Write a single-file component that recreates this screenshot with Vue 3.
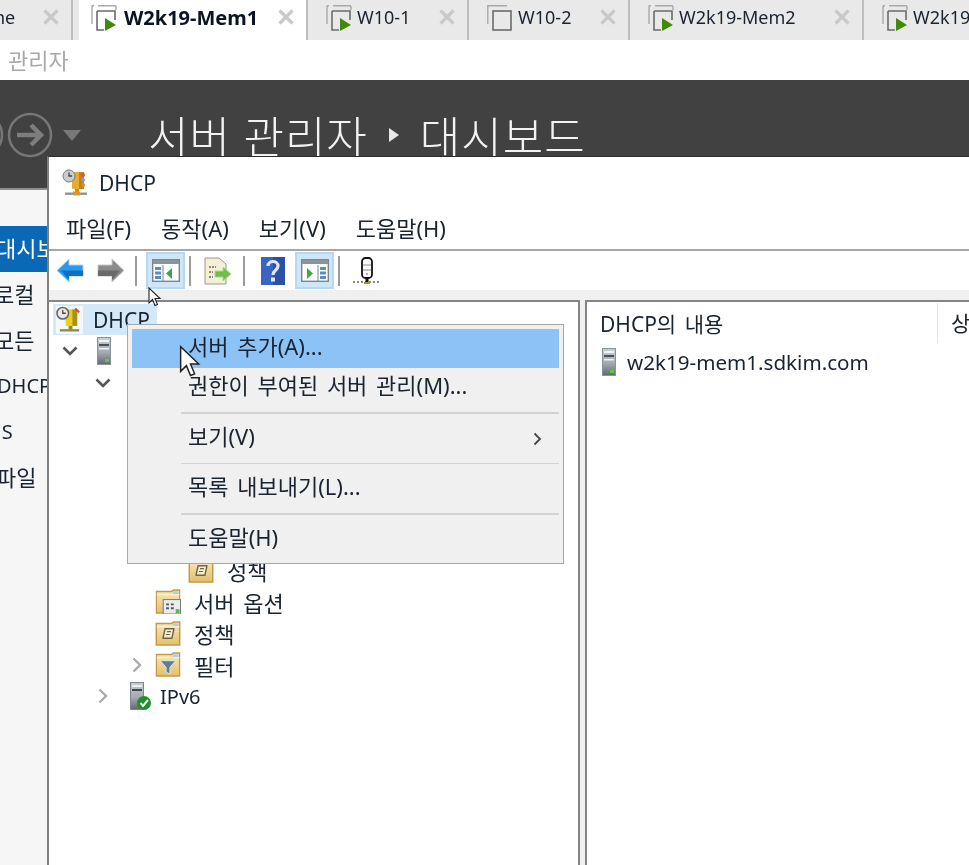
<script setup>
const tabs = [
  { label: 'ne', width: 71, first: true },
  { label: 'W2k19-Mem1', width: 227, icon: 'play', active: true },
  { label: 'W10-1', width: 153, icon: 'play' },
  { label: 'W10-2', width: 153, icon: 'plain' },
  { label: 'W2k19-Mem2', width: 226, icon: 'play' },
  { label: 'W2k19', width: 120, icon: 'play', last: true }
]
const sideItems = [
  { label: '대시보드', shift: -4, active: true },
  { label: '로컬 서버', shift: -6 },
  { label: '모든 서버', shift: -6 },
  { label: 'DHCP', shift: -3, latin: true },
  { label: 'DNS', shift: -28, latin: true },
  { label: '파일 및 저장소 서비스', shift: -4 }
]
const menus = ['파일(F)', '동작(A)', '보기(V)', '도움말(H)']
</script>

<template>
  <div class="screen">
    <svg class="defs" width="0" height="0">
      <defs>
        <linearGradient id="srv" x1="0" y1="0" x2="0" y2="1">
          <stop offset="0" stop-color="#c8ced2" /><stop offset=".55" stop-color="#a3abb0" /><stop offset="1" stop-color="#5f696f" />
        </linearGradient>
        <linearGradient id="fold" x1="0" y1="0" x2="0" y2="1">
          <stop offset="0" stop-color="#f8e9bb" /><stop offset="1" stop-color="#e3bf6c" />
        </linearGradient>
        <symbol id="server" viewBox="0 0 14 28">
          <rect x=".5" y=".5" width="13" height="27" fill="url(#srv)" stroke="#8a9398" />
          <rect x="2" y="3" width="10" height="2" fill="#f1f3f4" />
          <rect x="2" y="7" width="10" height="2" fill="#4a5257" />
          <rect x="2" y="11" width="10" height="1.5" fill="#eef1f2" />
          <rect x="8" y="22" width="4" height="3" fill="#63c63a" />
        </symbol>
        <symbol id="folder" viewBox="0 0 26 26">
          <path d="M.8 6V2.5h16l2 -1.5h6.4v24H.8z" fill="url(#fold)" stroke="#c29a45" stroke-width="1.5" />
          <path d="M1 6h24" stroke="#fff6d8" />
          <path d="M18 2.3h6v3h-6z" fill="#a9d2e6" />
        </symbol>
        <symbol id="scroll" viewBox="0 0 26 26">
          <path d="M10 8H19V9L17 18H8V17z" fill="#f7eccb" stroke="#6f6446" stroke-width="1.5" />
          <path d="M12 11h4M11 14h4" stroke="#6f6446" stroke-width="1.2" />
        </symbol>
        <symbol id="tabplay" viewBox="0 0 26 26">
          <path d="M7 .8H25M1 .8V19M.8 .8H3M25 1V5" fill="none" stroke="#a9a9a9" stroke-width="1.4" />
          <path d="M6 6H24V15M6 6V25H13" fill="none" stroke="#6b6b6b" stroke-width="1.6" />
          <path d="M14 13L25 20L14 26z" fill="#3f8a08" />
        </symbol>
        <symbol id="tabplain" viewBox="0 0 26 26">
          <path d="M.8 19V.8H20" fill="none" stroke="#a9a9a9" stroke-width="1.4" />
          <rect x="6" y="6" width="18" height="19" fill="none" stroke="#6b6b6b" stroke-width="1.6" />
        </symbol>
      </defs>
    </svg>

    <div class="tabbar">
      <div
        v-for="t in tabs"
        :key="t.label"
        class="tab"
        :class="{ active: t.active, first: t.first, last: t.last }"
        :style="{ width: t.width + 'px' }"
      >
        <svg v-if="t.icon" class="tab-icon" width="26" height="26">
          <use :href="t.icon === 'play' ? '#tabplay' : '#tabplain'" />
        </svg>
        <span class="tab-label">{{ t.label }}</span>
        <svg v-if="!t.last" class="tab-close" width="16" height="16" viewBox="0 0 16 16">
          <path d="M1.5 1.5L14.5 14.5M14.5 1.5L1.5 14.5" stroke="#c9c9c9" stroke-width="3.2" />
        </svg>
      </div>
    </div>

    <div class="appbar">관리자</div>

    <header class="head">
      <svg class="nav" width="84" height="50" viewBox="0 0 84 50">
        <circle cx="-19" cy="25" r="21" fill="none" stroke="#777" stroke-width="2.5" />
        <circle cx="30" cy="25" r="21" fill="none" stroke="#777" stroke-width="2.5" />
        <path d="M17 25H41M31 15L41 25L31 35" fill="none" stroke="#7d7d7d" stroke-width="4.5" />
        <path d="M63 20H81L72 31z" fill="#787878" />
      </svg>
      <div class="title">
        <span>서버 관리자</span>
        <svg class="crumb" width="10" height="14" viewBox="0 0 10 14"><path d="M0 0L10 7L0 14z" fill="#e8e8e8" /></svg>
        <span>대시보드</span>
      </div>
    </header>

    <nav class="side">
      <div v-for="s in sideItems" :key="s.label" class="side-item" :class="{ on: s.active, latin: s.latin }">
        <span :style="{ marginLeft: s.shift + 'px' }">{{ s.label }}</span>
      </div>
    </nav>

    <section class="win">
      <div class="win-title">
        <svg width="28" height="28" viewBox="0 0 28 28">
          <rect x="10" y="3" width="12" height="17" rx="1" fill="#e9ac2f" />
          <rect x="17" y="3" width="5" height="17" fill="#c4801a" />
          <circle cx="21" cy="6" r="2" fill="#d65a3c" /><circle cx="21" cy="11" r="2" fill="#6fa6c9" /><circle cx="21" cy="16" r="2" fill="#d68b3c" />
          <circle cx="7" cy="7" r="6" fill="#c9cdd0" stroke="#767b80" />
          <path d="M7 3.5V7H10" stroke="#444" stroke-width="1.3" fill="none" />
          <rect x="13" y="20" width="4" height="4" fill="#cf8a1f" />
          <rect x="3" y="23.5" width="22" height="2.4" fill="#8e9499" />
          <rect x="11" y="22.5" width="7" height="4" fill="#d99a2b" />
        </svg>
        <span>DHCP</span>
      </div>

      <div class="menubar">
        <span v-for="m in menus" :key="m">{{ m }}</span>
      </div>

      <div class="toolbar">
        <svg class="tool back" width="28" height="25" viewBox="0 0 28 25">
          <path d="M1 12.5L13 1V7H27V18H13V24z" fill="#2a9ae8" stroke="#a5d6f6" />
          <path d="M5 12.5H27V18H13V22z" fill="#0f6fc4" />
        </svg>
        <svg class="tool fwd" width="28" height="25" viewBox="0 0 28 25">
          <path d="M27 12.5L15 1V7H1V18H15V24z" fill="#8b8b8b" stroke="#c8c8c8" />
          <path d="M23 12.5H1V18H15V22z" fill="#6a6a6a" />
        </svg>
        <i class="sep s1"></i>
        <div class="tool-btn">
          <svg width="28" height="23" viewBox="0 0 28 23">
            <rect x=".7" y=".7" width="26.6" height="21.6" fill="#fff" stroke="#7a868c" stroke-width="1.4" />
            <rect x="1" y="1" width="26" height="4" fill="#8a959b" />
            <rect x="3" y="8" width="6" height="3" fill="#5a8ec0" /><rect x="3" y="12.5" width="6" height="3" fill="#5a8ec0" /><rect x="3" y="17" width="6" height="3" fill="#5a8ec0" />
            <path d="M11 6V22" stroke="#7a868c" />
            <path d="M20 9V20L14 14.5z" fill="#39a845" />
          </svg>
        </div>
        <i class="sep s2"></i>
        <svg class="tool doc" width="28" height="28" viewBox="0 0 28 28">
          <path d="M1 1H15L22 7V27H1z" fill="#f4efd6" stroke="#9a9a90" />
          <path d="M5 10H12M5 15H9M5 20H9" stroke="#6a6a55" stroke-width="1.6" stroke-dasharray="2 1" />
          <path d="M11 14H19V10L27 17L19 24V20H11z" fill="#6fbe45" stroke="#a8d98e" />
        </svg>
        <i class="sep s3"></i>
        <svg class="tool help" width="24" height="28" viewBox="0 0 24 28">
          <rect width="24" height="28" fill="#2c4fa8" />
          <rect width="12" height="28" fill="#3a63c2" />
          <path d="M7 9C7 3 17 3 17 9C17 13 12 13 12 18" fill="none" stroke="#dfe6f7" stroke-width="3.2" />
          <rect x="10" y="20.5" width="4" height="4" fill="#dfe6f7" />
        </svg>
        <div class="tool-btn second">
          <svg width="28" height="23" viewBox="0 0 28 23">
            <rect x=".7" y=".7" width="26.6" height="21.6" fill="#fff" stroke="#7a868c" stroke-width="1.4" />
            <rect x="1" y="1" width="26" height="4" fill="#8a959b" />
            <rect x="19" y="8" width="6" height="3" fill="#5a8ec0" /><rect x="19" y="12.5" width="6" height="3" fill="#5a8ec0" /><rect x="19" y="17" width="6" height="3" fill="#5a8ec0" />
            <path d="M17 6V22" stroke="#7a868c" />
            <path d="M6 9V20L12 14.5z" fill="#39a845" />
          </svg>
        </div>
        <i class="sep s4"></i>
        <svg class="tool mic" width="28" height="28" viewBox="0 0 28 28">
          <rect x="9" y="1" width="10" height="20" rx="3.5" fill="#fff" stroke="#111" stroke-width="1.8" />
          <path d="M10 8H18M10 13H18" stroke="#888" />
          <path d="M13 17h2" stroke="#d33" stroke-width="1.2" />
          <path d="M14 21V25" stroke="#111" stroke-width="3" />
          <path d="M0 25H28" stroke="#111" stroke-width="1" stroke-dasharray="2 2" />
          <path d="M11 26h6" stroke="#b09020" stroke-width="2" />
        </svg>
      </div>

      <div class="strip"></div>

      <div class="panes">
        <div class="pane tree">
          <div class="row root">
            <span class="hl">
              <svg width="27" height="28" viewBox="0 0 28 28">
                <rect x="10" y="3" width="12" height="17" fill="#ead01a" />
                <rect x="17" y="3" width="5" height="17" fill="#a8921a" />
                <path d="M20 2L24 6" stroke="#d43" stroke-width="2" />
                <circle cx="7" cy="7" r="6" fill="#e8e8e8" stroke="#666" stroke-width="1.6" />
                <path d="M7 3.5V7H10" stroke="#444" stroke-width="1.3" fill="none" />
                <rect x="13" y="20" width="4" height="4" fill="#9a8a12" />
                <rect x="4" y="23.5" width="20" height="2.4" fill="#8e8a50" />
              </svg>
              <b>DHCP</b>
            </span>
          </div>
          <div class="row lv1">
            <svg class="chev" width="16" height="10" viewBox="0 0 16 10"><path d="M1.5 1.5L8 8L14.5 1.5" fill="none" stroke="#555" stroke-width="2.6" /></svg>
            <svg class="srv" width="14" height="28"><use href="#server" /></svg>
          </div>
          <div class="row lv2">
            <svg class="chev" width="16" height="10" viewBox="0 0 16 10"><path d="M1.5 1.5L8 8L14.5 1.5" fill="none" stroke="#555" stroke-width="2.6" /></svg>
          </div>
          <div class="hidden-rows"></div>
          <div class="row lv5">
            <svg width="26" height="25"><use href="#folder" /><use href="#scroll" /></svg>
            <span>성책</span>
          </div>
          <div class="row lv4">
            <svg width="26" height="25" viewBox="0 0 26 26">
              <use href="#folder" />
              <rect x="8" y="11" width="18" height="15" fill="#e8ecef" stroke="#6f7a80" />
              <path d="M11 16h3M11 20h3M16 16h3M16 20h3" stroke="#556" stroke-width="2" />
              <rect x="21" y="21" width="4" height="4" fill="#5ab83a" />
            </svg>
            <span>서버 옵션</span>
          </div>
          <div class="row lv4">
            <svg width="26" height="25"><use href="#folder" /><use href="#scroll" /></svg>
            <span>정책</span>
          </div>
          <div class="row lv4 expand">
            <svg class="chev-r" width="10" height="16" viewBox="0 0 10 16"><path d="M1.5 1.5L8 8L1.5 14.5" fill="none" stroke="#aaa" stroke-width="2.4" /></svg>
            <svg width="26" height="25" viewBox="0 0 26 26">
              <use href="#folder" /><path d="M5 9H21L15 16V23L11 21V16z" fill="#5f7f90" stroke="#dfe8ec" />
            </svg>
            <span>필터</span>
          </div>
          <div class="row lv3 expand">
            <svg class="chev-r" width="10" height="16" viewBox="0 0 10 16"><path d="M1.5 1.5L8 8L1.5 14.5" fill="none" stroke="#aaa" stroke-width="2.4" /></svg>
            <svg class="v6" width="21" height="28" viewBox="0 0 21 28">
              <rect x=".5" y=".5" width="13" height="27" fill="url(#srv)" stroke="#7c868c" />
              <rect x="2" y="3" width="10" height="2" fill="#eef1f2" /><rect x="2" y="7" width="10" height="2" fill="#3f474c" />
              <circle cx="14" cy="21" r="7" fill="#1f8f2e" />
              <path d="M10.5 21L13 24L18 18" fill="none" stroke="#fff" stroke-width="2" />
            </svg>
            <span class="latin">IPv6</span>
          </div>
        </div>

        <div class="pane list">
          <div class="list-head">
            <span class="col-name">DHCP의 내용</span>
            <span class="col-state">상태</span>
          </div>
          <div class="list-row">
            <svg width="14" height="28"><use href="#server" /></svg>
            <span>w2k19-mem1.sdkim.com</span>
          </div>
        </div>
      </div>
    </section>

    <div class="ctx">
      <div class="ctx-item hot">서버 추가(A)...</div>
      <div class="ctx-item">권한이 부여된 서버 관리(M)...</div>
      <hr />
      <div class="ctx-item sub">보기(V)
        <svg width="9" height="14" viewBox="0 0 9 14"><path d="M1.5 1.5L7 7L1.5 12.5" fill="none" stroke="#444" stroke-width="1.8" /></svg>
      </div>
      <hr />
      <div class="ctx-item">목록 내보내기(L)...</div>
      <hr />
      <div class="ctx-item">도움말(H)</div>
    </div>

    <svg class="cursor small" width="14" height="20" viewBox="0 0 14 20">
      <path d="M1 1V16L4.5 12.5L7 18.5L9.5 17.5L7 11.5H12z" fill="#fff" stroke="#222" stroke-width="1.1" />
    </svg>
    <svg class="cursor big" width="23" height="33" viewBox="0 0 14 20">
      <path d="M1 1V16L4.5 12.5L7 18.5L9.5 17.5L7 11.5H12z" fill="#fff" stroke="#222" stroke-width=".9" />
    </svg>
  </div>
</template>

<style scoped>
.screen {
  position: relative;
  width: 969px;
  height: 865px;
  overflow: hidden;
  background: #fff;
  font-family: "Noto Sans", "Noto Sans CJK KR", sans-serif;
  font-size: 21px;
  word-spacing: 3px;
  color: #1a2330;
  display: flex;
  flex-direction: column;
  filter: blur(0.35px);
}
.defs { position: absolute; }

.tabbar {
  display: flex;
  gap: 8px;
  height: 40px;
  flex: none;
  background: #e9e9e9;
}
.tab {
  flex: none;
  display: flex;
  align-items: center;
  gap: 5px;
  padding: 0 0 0 12px;
  background: #e9e9e9;
  position: relative;
  box-shadow: 2px 0 0 #bdbdbd;
  font-size: 18px;
  box-sizing: border-box;
}
.tab.first { padding-left: 0; justify-content: flex-start; }
.tab.first .tab-label { margin-left: -6px; }
.tab.active { background: #fff; font-size: 20px; font-weight: 700; color: #0c1420; gap: 7px; }
.tab-icon { flex: none; margin-top: -5px; }
.tab-label { margin-top: -6px; }
.tab-close { position: absolute; right: 12px; top: 9px; }

.appbar {
  height: 40px;
  flex: none;
  padding-left: 8px;
  line-height: 40px;
  color: #a9a9a9;
  font-size: 22px;
}

.head {
  height: 110px;
  flex: none;
  background: #414141;
  border-bottom: 2px solid #8f8f8f;
  box-sizing: border-box;
  display: flex;
  align-items: flex-start;
  padding-top: 30px;
}
.nav { flex: none; overflow: visible; }
.title {
  margin-left: 64px;
  margin-top: 2px;
  display: flex;
  align-items: center;
  gap: 21px;
  font-size: 44px;
  letter-spacing: 1px;
  word-spacing: 0;
  font-weight: 300;
  color: #f2f2f2;
  line-height: 50px;
}
.crumb { margin-top: -4px; }

.side {
  flex: 1;
  width: 47px;
  overflow: hidden;
  background: #f6f6f6;
  padding-top: 36px;
}
.side-item {
  height: 45.8px;
  line-height: 45px;
  white-space: nowrap;
  font-size: 22px;
  word-spacing: 9px;
  width: 47px;
  overflow: hidden;
}
.side-item.latin { font-size: 20px; }
.side-item.on { background: #0969b6; color: #fff; }

.win {
  position: absolute;
  left: 47px;
  top: 156px;
  width: 940px;
  height: 720px;
  background: #fff;
  box-sizing: border-box;
  border-left: 2px solid #7f7f7f;
  border-top: 1px solid #2c2c2c;
  display: flex;
  flex-direction: column;
}
.win-title {
  height: 51px;
  flex: none;
  display: flex;
  align-items: center;
  gap: 9px;
  padding-left: 13px;
  font-size: 21px;
}
.menubar {
  height: 38px;
  margin-bottom: 3px;
  flex: none;
  display: flex;
  align-items: center;
  gap: 30px;
  padding-left: 17px;
  font-size: 22px;
}
.toolbar {
  height: 41px;
  flex: none;
  border-top: 2px solid #a6a6a6;
  box-sizing: border-box;
  position: relative;
  display: flex;
  align-items: center;
  padding-left: 7px;
}
.tool { flex: none; }
.fwd { margin-left: 13px; }
.sep {
  width: 2px;
  height: 30px;
  background: #9b9b9b;
  flex: none;
}
.s1 { margin-left: 10px; }
.tool-btn {
  width: 39px;
  height: 37px;
  flex: none;
  margin-left: 9px;
  box-sizing: border-box;
  background: #cfe6f8;
  border: 2px solid #b5d9f5;
  display: flex;
  align-items: center;
  justify-content: center;
}
.s2 { margin-left: 4px; }
.doc { margin-left: 13px; }
.s3 { margin-left: 11px; }
.help { margin-left: 16px; }
.tool-btn.second { margin-left: 10px; }
.s4 { margin-left: 4px; }
.mic { margin-left: 13px; }

.strip {
  height: 10px;
  flex: none;
  background: #f0f0f0;
}
.panes {
  flex: 1;
  display: flex;
  gap: 5px;
  background: #f0f0f0;
  min-height: 0;
}
.pane {
  background: #fff;
  border-top: 2px solid #858585;
  box-sizing: border-box;
}
.tree {
  width: 531px;
  flex: none;
  border-right: 2px solid #858585;
  padding-top: 2px;
}
.row {
  height: 31.5px;
  display: flex;
  align-items: center;
  gap: 13px;
  position: relative;
  font-size: 22px;
}
.hl {
  display: flex;
  align-items: center;
  gap: 10px;
  background: #d3e8f9;
  height: 31px;
  margin-left: 4px;
  padding-left: 3px;
  width: 104px;
  box-sizing: border-box;
}
.hl svg { background: #f3f8fc; }
.hl b { font-weight: 400; font-size: 21px; }
.lv1 { padding-left: 48px; }
.lv1 .chev { position: absolute; left: 13px; }
.lv2 .chev { position: absolute; left: 46px; }
.hidden-rows { height: 156px; }
.lv5 { padding-left: 139px; }
.lv4 { padding-left: 106px; }
.lv3 { padding-left: 81px; }
.lv3 { gap: 9px; }
.latin { font-size: 20px; }
.expand .chev-r { position: absolute; }
.lv4 .chev-r { left: 83px; }
.lv3 .chev-r { left: 49px; }

.list { flex: 1; border-left: 2px solid #858585; }
.list-head {
  height: 42px;
  position: relative;
  display: flex;
  align-items: center;
  padding-left: 13px;
  font-size: 21px;
}
.col-state {
  position: absolute;
  left: 350px;
  padding-left: 13px;
  height: 40px;
  line-height: 40px;
  border-left: 1px solid #e4e4e4;
  white-space: nowrap;
}
.list-row {
  display: flex;
  align-items: center;
  gap: 11px;
  padding-left: 15px;
  height: 36px;
  font-size: 20.6px;
}

.ctx {
  position: absolute;
  left: 127px;
  top: 324px;
  width: 437px;
  height: 240px;
  box-sizing: border-box;
  padding: 4px;
  background: #f0f0f0;
  border: 1.5px solid #a8a8a8;
}
.ctx-item {
  height: 39px;
  line-height: 35px;
  padding-left: 56px;
  font-size: 22px;
  position: relative;
}
.ctx-item.hot { background: #8cc3f7; }
.ctx-item.sub svg { position: absolute; right: 17px; top: 13px; }
.ctx hr {
  margin: 5px 0 5px 49px;
  border: 0;
  height: 1.5px;
  background: #d2d2d2;
}

.cursor { position: absolute; }
.small { left: 148px; top: 287px; }
.big { left: 179px; top: 345px; }
</style>

<style>
html, body { margin: 0; background: #fff; overflow: hidden; }
</style>
